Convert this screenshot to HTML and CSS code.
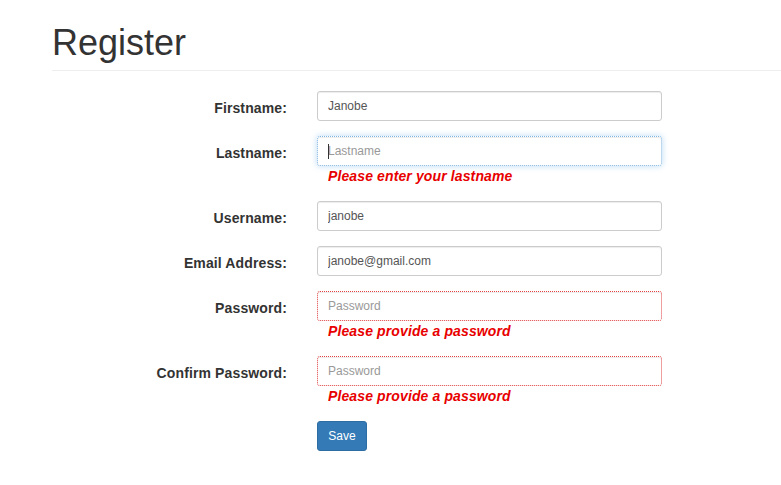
FILE: index.html
```html
<!DOCTYPE html>
<html>
<head>
<meta charset="utf-8">
<link rel="stylesheet" href="styles.css">
</head>
<body>
<div class="page-header"><h1>Register</h1></div>
<form class="form">
  <div class="row">
    <label class="lbl">Firstname:</label>
    <div class="field"><input class="inp" type="text" value="Janobe"></div>
  </div>
  <div class="row">
    <label class="lbl">Lastname:</label>
    <div class="field">
      <div class="wrap"><input class="inp focus" type="text" placeholder="Lastname"><span class="caret"></span></div>
      <div class="error">Please enter your lastname</div>
    </div>
  </div>
  <div class="row">
    <label class="lbl">Username:</label>
    <div class="field"><input class="inp" type="text" value="janobe"></div>
  </div>
  <div class="row">
    <label class="lbl">Email Address:</label>
    <div class="field"><input class="inp" type="text" value="janobe@gmail.com"></div>
  </div>
  <div class="row">
    <label class="lbl">Password:</label>
    <div class="field">
      <input class="inp invalid" type="password" placeholder="Password">
      <div class="error">Please provide a password</div>
    </div>
  </div>
  <div class="row">
    <label class="lbl">Confirm Password:</label>
    <div class="field">
      <input class="inp invalid" type="password" placeholder="Password">
      <div class="error">Please provide a password</div>
    </div>
  </div>
  <div class="row">
    <div></div>
    <div class="field"><button class="btn" type="button">Save</button></div>
  </div>
</form>
</body>
</html>
```
FILE: styles.css
```css
html, body {
  margin: 0;
  padding: 0;
  background: #fff;
  font-family: "Liberation Sans", Arial, sans-serif;
  color: #333;
}
.page-header {
  margin-left: 52px;
  padding-bottom: 7px;
  border-bottom: 1px solid #eee;
}
.page-header h1 {
  margin: 23px 0 0 0;
  font-size: 36px;
  font-weight: 400;
  line-height: 1.1;
  color: #333;
}
.form {
  padding-top: 20px;
}
.row {
  display: grid;
  grid-template-columns: 287px 345px;
  column-gap: 30px;
  margin-bottom: 15px;
}
.lbl {
  font-size: 14px;
  font-weight: 700;
  text-align: right;
  line-height: 20px;
  padding-top: 7px;
  color: #333;
  letter-spacing: 0.12px;
}
.field {
  display: flex;
  flex-direction: column;
}
.wrap {
  position: relative;
}
.inp {
  box-sizing: border-box;
  width: 345px;
  height: 30px;
  padding: 5px 10px;
  font-size: 12px;
  font-family: "Liberation Sans", Arial, sans-serif;
  color: #555;
  border: 1px solid #ccc;
  border-radius: 3px;
  box-shadow: inset 0 1px 1px rgba(0,0,0,.075);
  outline: none;
  display: block;
}
.inp::placeholder {
  color: #999;
}
.focus {
  border: 1px dotted #7fb3e0;
  box-shadow: inset 0 1px 1px rgba(0,0,0,.075), 0 0 6px rgba(102,175,233,.45);
}
.caret {
  position: absolute;
  left: 11px;
  top: 8px;
  width: 1px;
  height: 15px;
  background: #333;
}
.invalid {
  border: 1px dotted #e04040;
}
.error {
  color: #e80000;
  font-size: 14px;
  font-weight: 700;
  font-style: italic;
  line-height: 20px;
  padding-left: 11px;
  letter-spacing: 0.12px;
}
.btn {
  width: 50px;
  height: 30px;
  padding: 5px 10px;
  font-size: 12px;
  font-family: "Liberation Sans", Arial, sans-serif;
  color: #fff;
  background: #337ab7;
  border: 1px solid #2e6da4;
  border-radius: 3px;
}
```
